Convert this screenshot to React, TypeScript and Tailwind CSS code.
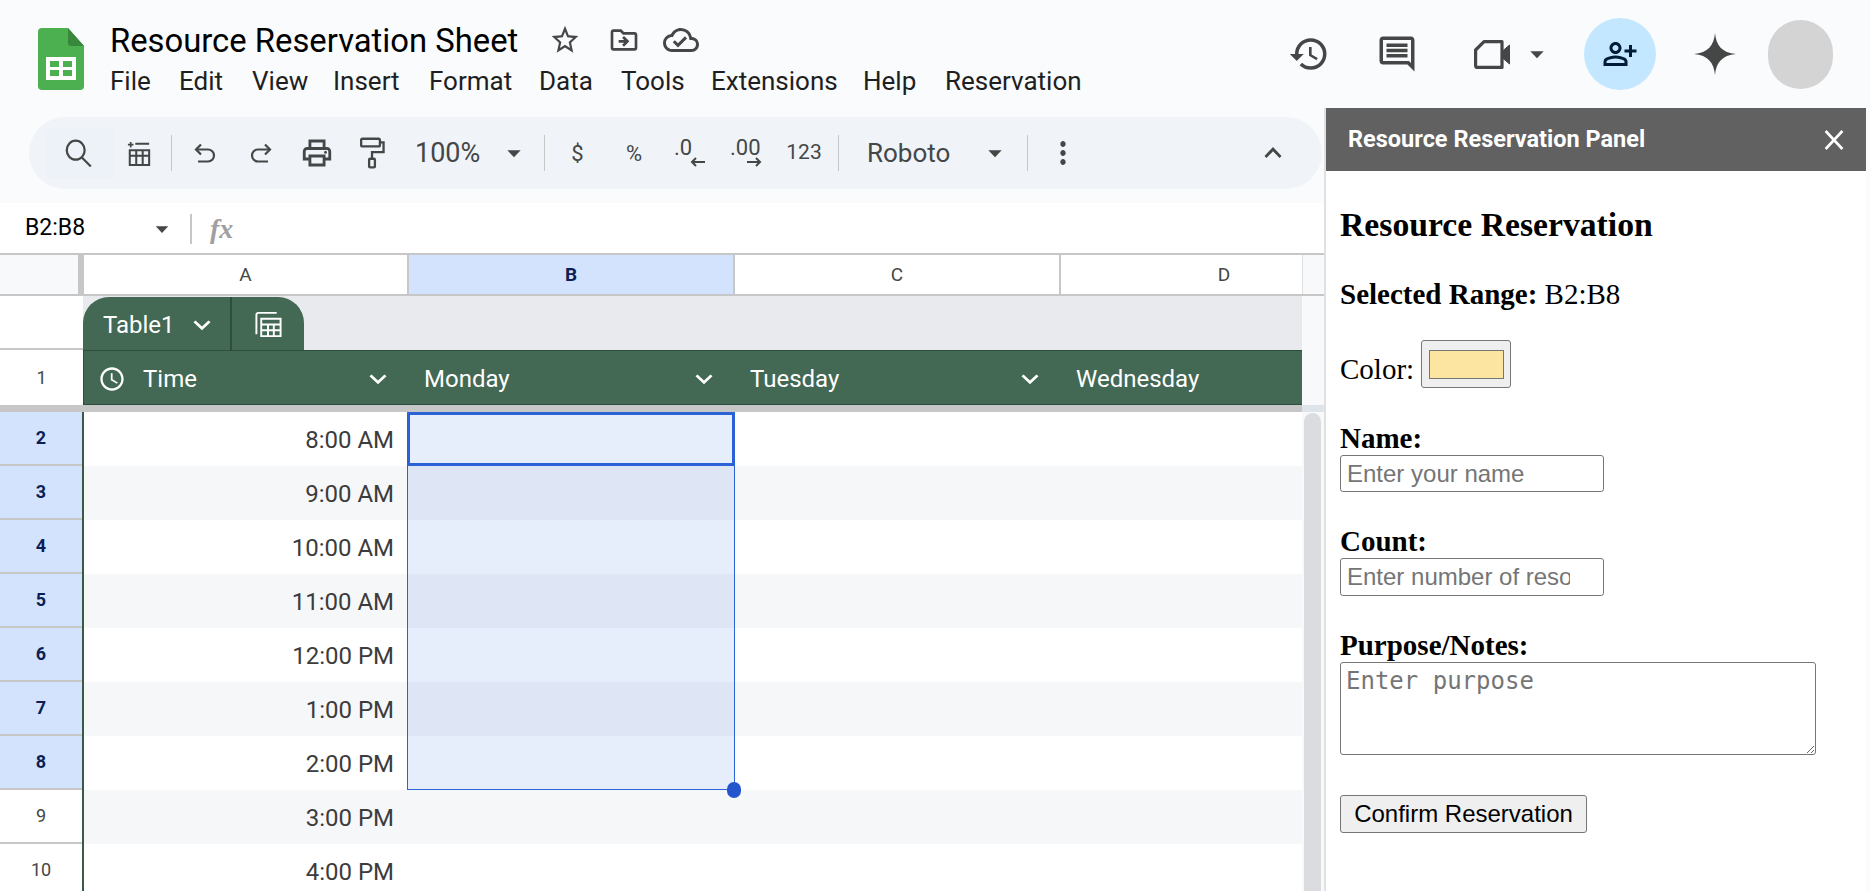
import type { ReactNode } from "react";
import {
  MdArrowDropDown,
  MdClose,
  MdExpandLess,
  MdHistory,
  MdKeyboardArrowDown,
  MdMoreVert,
  MdOutlineCloudDone,
  MdOutlineComment,
  MdOutlineDriveFileMove,
  MdOutlinePersonAddAlt,
  MdOutlinePrint,
  MdOutlineSchedule,
  MdStarBorder,
} from "react-icons/md";

const stretch = { preserveAspectRatio: "none" };

const menus: [string, string][] = [
  ["File", "w-[69px]"],
  ["Edit", "w-[73px]"],
  ["View", "w-[81px]"],
  ["Insert", "w-[96px]"],
  ["Format", "w-[110px]"],
  ["Data", "w-[82px]"],
  ["Tools", "w-[90px]"],
  ["Extensions", "w-[152px]"],
  ["Help", "w-[82px]"],
  ["Reservation", "w-[140px]"],
];

const times = ["8:00 AM", "9:00 AM", "10:00 AM", "11:00 AM", "12:00 PM", "1:00 PM", "2:00 PM", "3:00 PM", "4:00 PM"];

const Slot = ({ w, children }: { w: string; children?: ReactNode }) => (
  <div className={`${w} h-full shrink-0 flex items-center justify-center`}>{children}</div>
);

const Divider = () => <div className="w-px h-[36px] bg-[#c7c7c7] shrink-0" />;

const Logo = () => (
  <svg viewBox="0 0 46 62" className="w-[46px] h-[62px] shrink-0">
    <path d="M4 0H30L46 18V58a4 4 0 0 1-4 4H4a4 4 0 0 1-4-4V4a4 4 0 0 1 4-4z" fill="#4caf50" />
    <path d="M30 0L46 18H33a3 3 0 0 1-3-3z" fill="#38883c" />
    <path d="M8 29H38V52H8zM12 33V39H21V33zM25 33V39H34V33zM12 42V48H21V42zM25 42V48H34V42z" fill="#fff" fillRule="evenodd" />
  </svg>
);

const Search = () => (
  <svg viewBox="0 0 24 25" className="w-[27px] h-[28px] -ml-[2px]" fill="none" stroke="#444746" strokeWidth="2">
    <ellipse cx="9.5" cy="10" rx="8" ry="8.5" />
    <path d="M15 16.5L23 24.5" />
  </svg>
);

const AddTable = () => (
  <svg viewBox="0 0 26 30" className="w-[24px] h-[28px]" fill="none" stroke="#444746" strokeWidth="2.2">
    <path d="M1 6H7M4 3V9" strokeWidth="1.8" />
    <path d="M9 5H24M3 12H24V28H3zM10 12V28M17 12V28" />
    <path d="M3 18H24" />
  </svg>
);

const Undo = ({ flip }: { flip?: boolean }) => (
  <svg viewBox="0 0 22 20" className={`w-[22px] h-[20px] ${flip ? "scale-x-[-1]" : ""}`} fill="none" stroke="#444746" strokeWidth="2.2">
    <path d="M7 1.5L2 6.5L7 11.5" />
    <path d="M2 6.5H14a6 6 0 0 1 0 12H4" />
  </svg>
);

const Paint = () => (
  <svg viewBox="0 0 26 32" className="w-[25px] h-[32px]" fill="none" stroke="#444746" strokeWidth="2.4">
    <rect x="1.2" y="1.2" width="19.5" height="8" rx="1.5" />
    <path d="M21 5H24.5V15H12.5V22" />
    <rect x="9.5" y="22" width="6" height="9" rx="1" />
  </svg>
);

const Decimal = ({ label, dir }: { label: string; dir: "left" | "right" }) => (
  <div className="relative w-[40px] h-[40px] pl-[4px] text-left text-[22px] leading-[30px] text-[#444746] font-['Roboto',sans-serif]">
    {label}
    <svg viewBox="0 0 16 10" className="absolute bottom-[6px] right-[4px] w-[16px] h-[10px]" fill="none" stroke="#444746" strokeWidth="2">
      {dir === "left" ? <path d="M15 5H2M6 1L2 5L6 9" /> : <path d="M1 5H14M10 1L14 5L10 9" />}
    </svg>
  </div>
);

const Video = () => (
  <svg viewBox="0 0 37 29" className="w-[37px] h-[29px]" fill="none" stroke="#444746" strokeWidth="3.2" strokeLinejoin="round">
    <path d="M10 1.6H28V27.4H3.6a2 2 0 0 1-2-2V10z" />
    <path d="M28 11.5L35.5 5V24L28 17.5" fill="#444746" strokeWidth="1" />
  </svg>
);

const Sparkle = () => (
  <svg viewBox="0 0 42 42" {...stretch} className="w-[42px] h-[42px]">
    <path d="M21 0C22 12 28 20 42 21C28 22 22 30 21 42C20 30 14 22 0 21C14 20 20 12 21 0Z" fill="#444746" />
  </svg>
);

const TableIcon = () => (
  <svg viewBox="0 0 30 30" className="w-[30px] h-[29px]" fill="none" stroke="#fff" strokeWidth="2">
    <path d="M3 25V5a2 2 0 0 1 2-2H24" />
    <path d="M8 9H28V27H8zM8 15H28M8 21H28M15 15V27M21 15V27" />
  </svg>
);

const ColumnHead = ({ w, label, active }: { w: string; label: string; active?: boolean }) => (
  <div
    className={`${w} shrink-0 h-full pt-[1px] flex items-center justify-center border-r-2 border-[#c7c7c7] text-[19px] ${
      active ? "bg-[#d3e3fd] font-bold text-[#0b1f56]" : "bg-white text-[#444746]"
    }`}
  >
    {label}
  </div>
);

const TableHead = ({ w, label, chevron, icon }: { w: string; label: string; chevron?: boolean; icon?: boolean }) => (
  <div className={`${w} shrink-0 h-full flex items-center pl-4 pt-[2px] text-[24px] text-white`}>
    {icon && <MdOutlineSchedule {...stretch} className="w-[28px] h-[28px] -ml-[2px] mr-[17px] shrink-0" />}
    <span className="flex-1">{label}</span>
    {chevron && <MdKeyboardArrowDown {...stretch} className="w-[34px] h-[32px] mr-[13px]" />}
  </div>
);

const Row = ({ n, time }: { n: number; time: string }) => {
  const selected = n <= 8;
  return (
    <div className="flex h-[54px]">
      <div
        className={`w-[82px] shrink-0 flex items-center justify-center pb-[2px] border-b-2 border-[#c7c7c7] text-[18px] ${
          selected ? "bg-[#d3e3fd] font-bold text-[#0b1f56]" : "bg-white text-[#444746]"
        }`}
      >
        {n}
      </div>
      <div className="w-[2px] shrink-0 bg-[#3a5a48]" />
      <div className={`flex-1 ${n % 2 === 1 ? "bg-[#f6f7f9]" : "bg-white"}`}>
        <div className="w-[310px] h-full pt-[1px] flex items-center justify-end text-[24px] text-[#3c3c3c]">{time}</div>
      </div>
    </div>
  );
};

const Panel = () => (
  <aside className="w-[542px] shrink-0 h-full flex flex-col bg-white border-l-2 border-[#e0e0e0] text-black">
    <div className="h-[63px] shrink-0 bg-[#616161] flex items-center justify-between pl-[22px] pr-[16px] text-white font-['Roboto',sans-serif] font-bold text-[23.5px]">
      <span>Resource Reservation Panel</span>
      <MdClose {...stretch} className="w-[32px] h-[34px]" />
    </div>
    <div className="flex-1 pl-[14px] font-['Liberation_Serif',serif] text-[29px]">
      <h2 className="mt-[36px] h-[36px] leading-[36px] text-[33.7px] font-bold">Resource Reservation</h2>
      <p className="mt-[33px] h-[36px] leading-[36px]">
        <b>Selected Range:</b> B2:B8
      </p>
      <div className="mt-[28px] h-[48px] flex items-center gap-[7px]">
        <span className="pt-[11px]">Color:</span>
        <div className="w-[90px] h-[48px] rounded-[3px] border border-[#767676] bg-[#efefef] flex items-center justify-center">
          <div className="w-[75px] h-[29px] border border-[#767676] bg-[#fce5a0]" />
        </div>
      </div>
      <label className="mt-[33px] block h-[34px] leading-[34px] font-bold">Name:</label>
      <input
        placeholder="Enter your name"
        className="block w-[264px] h-[37px] px-[6px] rounded-[3px] border border-[#767676] font-['Liberation_Sans',sans-serif] text-[24px] placeholder:text-[#757575]"
      />
      <label className="mt-[32px] block h-[34px] leading-[34px] font-bold">Count:</label>
      <input
        placeholder="Enter number of resources"
        className="block w-[264px] h-[38px] pl-[6px] pr-[33px] rounded-[3px] border border-[#767676] font-['Liberation_Sans',sans-serif] text-[24px] placeholder:text-[#757575]"
      />
      <label className="mt-[32px] block h-[34px] leading-[34px] font-bold">Purpose/Notes:</label>
      <textarea
        placeholder="Enter purpose"
        className="block w-[476px] h-[93px] px-[5px] py-[3px] rounded-[3px] border border-[#767676] font-['DejaVu_Sans_Mono',monospace] text-[24px] leading-[30px] placeholder:text-[#757575]"
      />
      <button className="mt-[40px] block w-[247px] h-[38px] rounded-[3px] border border-[#767676] bg-[#efefef] font-['Liberation_Sans',sans-serif] text-[24px]">
        Confirm Reservation
      </button>
    </div>
  </aside>
);

export default function App() {
  return (
    <div className="w-[1870px] h-[891px] overflow-hidden bg-[#f9fbfd] font-['Roboto',sans-serif] text-[#1f1f1f]">
      {/* top bar */}
      <header className="h-[108px] flex">
        <div className="ml-[38px] mt-[28px]">
          <Logo />
        </div>
        <div className="ml-[26px] pt-[20px]">
          <div className="flex items-center h-[40px]">
            <span className="text-[32.8px] pt-[4px] w-[439px] text-black whitespace-nowrap">Resource Reservation Sheet</span>
            <MdStarBorder {...stretch} className="w-[32px] h-[34px] text-[#444746]" />
            <MdOutlineDriveFileMove {...stretch} className="ml-[27px] w-[32px] h-[32px] text-[#444746]" />
            <MdOutlineCloudDone {...stretch} className="ml-[23px] w-[36px] h-[36px] text-[#444746]" />
          </div>
          <nav className="flex h-[40px] items-center text-[26px] mt-[1px]">
            {menus.map(([label, w]) => (
              <span key={label} className={w}>
                {label}
              </span>
            ))}
          </nav>
        </div>
        <div className="ml-auto flex items-center h-[108px] text-[#444746]">
          <MdHistory {...stretch} className="w-[42px] h-[42px]" />
          <MdOutlineComment {...stretch} className="ml-[46px] w-[42px] h-[42px]" />
          <div className="ml-[56px]">
            <Video />
          </div>
          <MdArrowDropDown {...stretch} className="ml-[10px] w-[32px] h-[34px]" />
          <div className="ml-[31px] w-[72px] h-[72px] rounded-full bg-[#c2e7ff] flex items-center justify-center">
            <MdOutlinePersonAddAlt {...stretch} className="w-[36px] h-[36px] text-[#001d35]" />
          </div>
          <div className="ml-[38px]">
            <Sparkle />
          </div>
          <div className="ml-[32px] mr-[37px] w-[65px] h-[69px] rounded-full bg-[#d4d4d4]" />
        </div>
      </header>

      <div className="h-[783px] flex">
        <main className="w-[1324px] shrink-0 flex flex-col">
          {/* toolbar */}
          <div className="h-[95px] pt-[9px] pl-[29px] pr-[2px] shrink-0">
            <div className="h-[72px] rounded-full bg-[#f0f4f9] flex items-center pl-[16px] text-[#444746]">
              <div className="w-[68px] h-[50px] shrink-0 bg-[#edf1f8] rounded-l-[8px] flex items-center justify-center">
                <Search />
              </div>
              <Slot w="w-[58px] pr-[6px]"><AddTable /></Slot>
              <Divider />
              <div className="w-[5px] shrink-0" />
              <Slot w="w-[56px]"><Undo /></Slot>
              <Slot w="w-[56px]"><Undo flip /></Slot>
              <Slot w="w-[56px]"><MdOutlinePrint {...stretch} className="w-[34px] h-[36px]" /></Slot>
              <Slot w="w-[55px]"><Paint /></Slot>
              <span className="ml-[15px] w-[83px] shrink-0 text-[27px]">100%</span>
              <MdArrowDropDown {...stretch} className="w-[32px] h-[34px] shrink-0" />
              <div className="w-[14px] shrink-0" />
              <Divider />
              <Slot w="w-[65px]"><span className="text-[22px]">$</span></Slot>
              <Slot w="w-[48px]"><span className="text-[22px]">%</span></Slot>
              <Slot w="w-[64px]"><Decimal label=".0" dir="left" /></Slot>
              <Slot w="w-[48px]"><Decimal label=".00" dir="right" /></Slot>
              <Slot w="w-[68px]"><span className="text-[21px]">123</span></Slot>
              <Divider />
              <span className="ml-[28px] w-[112px] shrink-0 text-[26px]">Roboto</span>
              <MdArrowDropDown {...stretch} className="w-[32px] h-[34px] shrink-0" />
              <div className="w-[16px] shrink-0" />
              <Divider />
              <Slot w="w-[70px]"><MdMoreVert {...stretch} className="w-[32px] h-[36px]" /></Slot>
              <div className="flex-1 flex justify-end pr-[32px]">
                <MdExpandLess {...stretch} className="w-[34px] h-[36px]" />
              </div>
            </div>
          </div>

          {/* formula bar */}
          <div className="h-[50px] shrink-0 pt-[1px] bg-white flex items-center">
            <span className="pl-[25px] w-[147px] text-[23px] text-black">B2:B8</span>
            <MdArrowDropDown {...stretch} className="w-[30px] h-[32px] text-[#444746]" />
            <div className="ml-[13px] w-[2px] h-[30px] bg-[#c7c7c7]" />
            <span className="ml-[18px] font-['Liberation_Serif',serif] italic font-bold text-[28px] text-[#a0a0a0]">fx</span>
          </div>

          {/* column letters */}
          <div className="h-[43px] shrink-0 flex border-t-2 border-b-2 border-[#c7c7c7]">
            <div className="w-[78px] shrink-0 bg-[#f8f9fa]" />
            <div className="w-[6px] shrink-0 bg-[#c7c7c7]" />
            <ColumnHead w="w-[325px]" label="A" />
            <ColumnHead w="w-[326px]" label="B" active />
            <ColumnHead w="w-[326px]" label="C" />
            <div className="w-[241px] shrink-0 bg-white overflow-hidden">
              <div className="w-[326px] h-full pt-[1px] flex items-center justify-center text-[19px] text-[#444746]">D</div>
            </div>
            <div className="flex-1 bg-[#f8f9fa] border-l border-[#e0e0e0]" />
          </div>

          <div className="flex-1 flex min-h-0">
            <div className="w-[1302px] shrink-0 flex flex-col">
              {/* table tab */}
              <div className="h-[54px] shrink-0 flex">
                <div className="w-[83px] shrink-0 bg-white border-b-2 border-[#c7c7c7]" />
                <div className="flex-1 bg-[#e8eaed] flex items-end">
                  <div className="w-[221px] h-[53px] rounded-t-[26px] bg-[#436853] flex text-white">
                    <div className="w-[149px] pt-[2px] flex items-center pl-[20px] border-r-2 border-[#2f4d3c] text-[24px]">
                      <span>Table1</span>
                      <MdKeyboardArrowDown {...stretch} className="ml-[10px] w-[34px] h-[32px]" />
                    </div>
                    <div className="flex-1 pt-[2px] flex items-center justify-center">
                      <TableIcon />
                    </div>
                  </div>
                </div>
              </div>

              {/* frozen header row */}
              <div className="h-[55px] shrink-0 flex">
                <div className="w-[83px] shrink-0 bg-white flex items-center justify-center text-[18px] text-[#444746]">1</div>
                <div className="flex-1 flex bg-[#436853] border border-[#2f4d3c]">
                  <TableHead w="w-[324px]" label="Time" chevron icon />
                  <TableHead w="w-[326px]" label="Monday" chevron />
                  <TableHead w="w-[326px]" label="Tuesday" chevron />
                  <TableHead w="w-[242px]" label="Wednesday" />
                </div>
              </div>
              <div className="h-[7px] shrink-0 bg-[#c7c7c7]" />

              {/* rows and selection */}
              <div className="relative flex-1 overflow-hidden">
                {times.map((time, i) => (
                  <Row key={time} n={i + 2} time={time} />
                ))}
                <div className="absolute left-[407px] top-0 w-[328px] h-[378px] bg-[#326edc]/[0.12] border border-[#2b63d6]" />
                <div className="absolute left-[407px] top-0 w-[328px] h-[54px] border-[3px] border-[#2b63d6]" />
                <div className="absolute left-[727px] top-[370px] w-[14px] h-[16px] rounded-full bg-[#2356cc]" />
              </div>
            </div>

            {/* scrollbar gutter */}
            <div className="flex-1 bg-white flex flex-col">
              <div className="h-[109px] bg-[#f8f9fa]" />
              <div className="h-[7px] bg-[#dfe3ea]" />
              <div className="flex-1 bg-[#f8f9fa] pt-[1px] pl-[2px] pr-[3px]">
                <div className="h-full rounded-t-full bg-[#dadce0]" />
              </div>
            </div>
          </div>
        </main>
        <Panel />
      </div>
    </div>
  );
}
